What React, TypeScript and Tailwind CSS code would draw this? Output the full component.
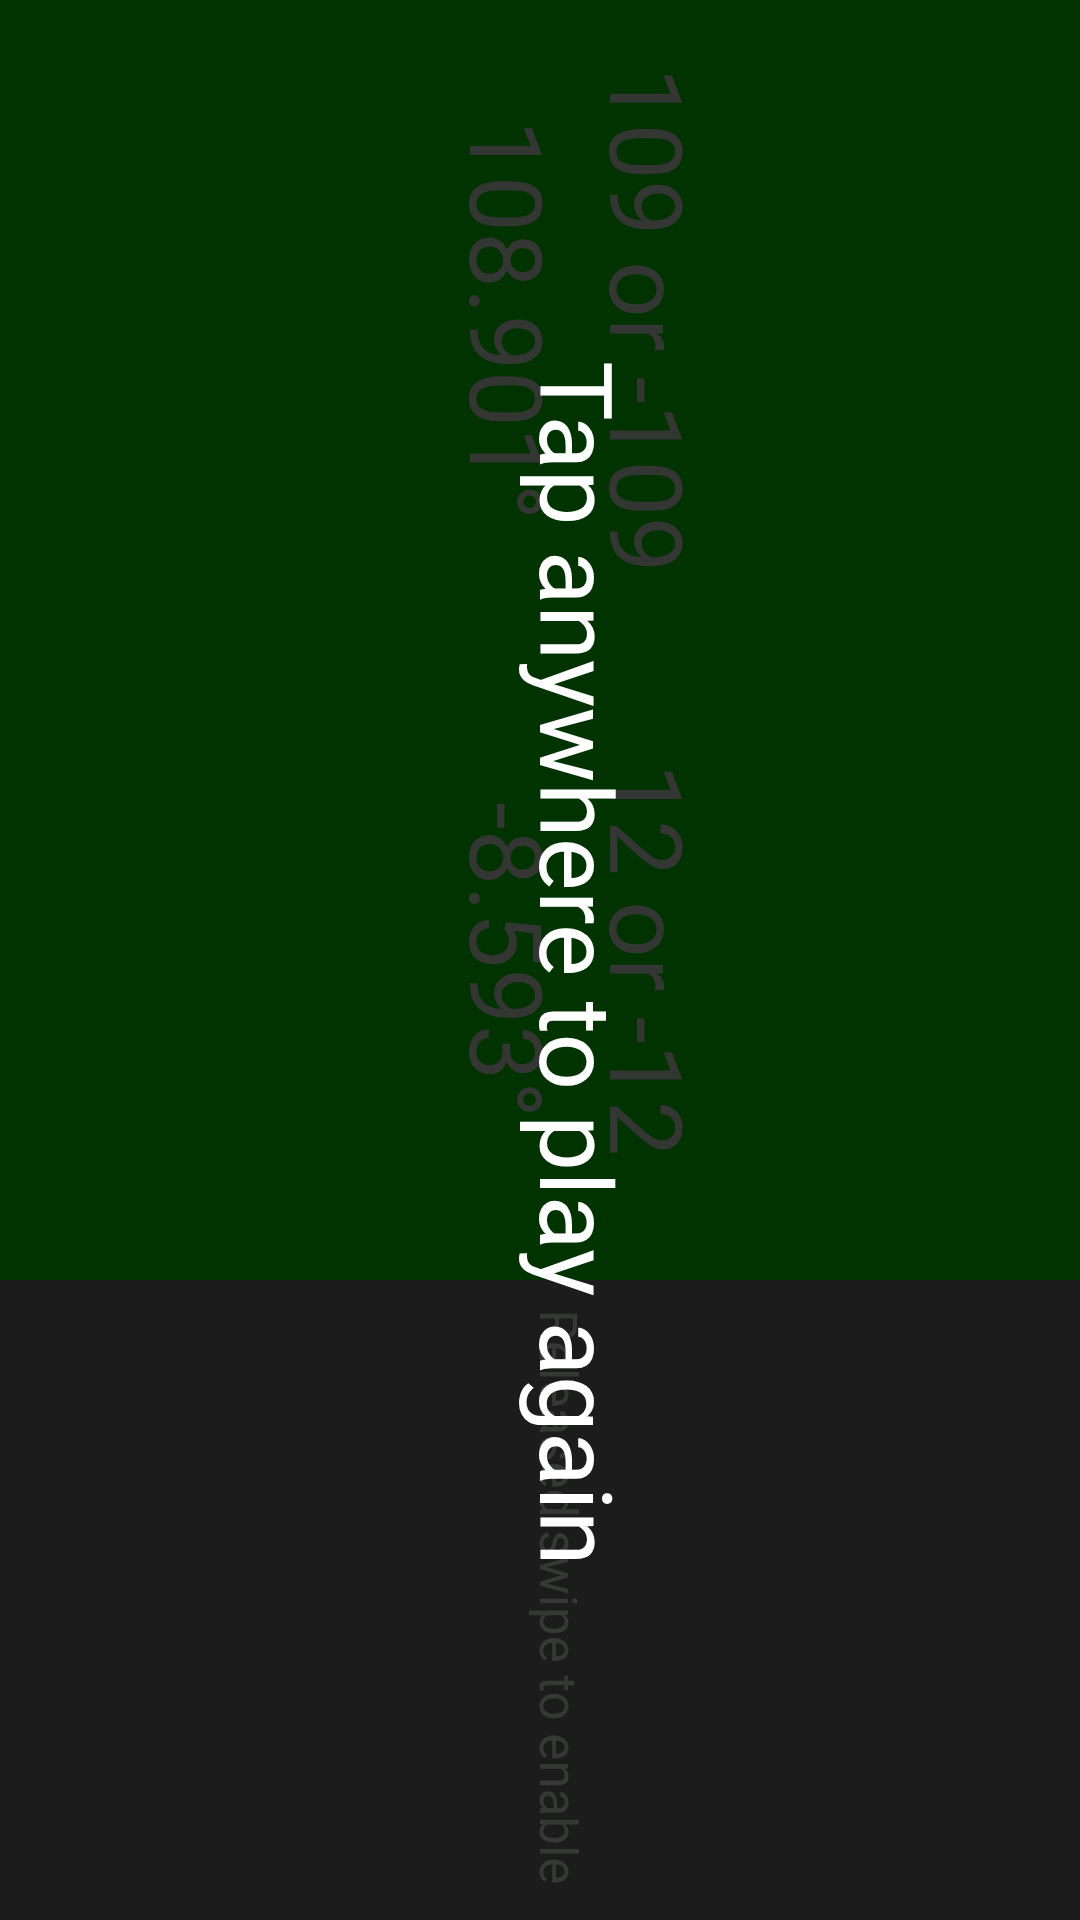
import React from "react";

const readings = [
  { target: "109 or -109", value: "108.901°" },
  { target: "12 or -12", value: "-8.593°" },
];

export default function App() {
  return (
    <div
      className="relative w-[1080px] h-[1920px] overflow-hidden bg-[#1b1c1b]"
      style={{ fontFamily: "Roboto, 'Noto Sans', sans-serif" }}
    >
      {/* landscape screen, turned a quarter clockwise */}
      <div className="absolute left-0 top-0 w-[1920px] h-[1080px] origin-top-left rotate-90 translate-x-[1080px] flex">
        <div className="w-[1280px] h-full bg-[#003300] grid grid-cols-2 content-start pt-[366px]">
          {readings.map((r) => (
            <div key={r.target} className="flex flex-col items-center text-[100px] leading-[140px] text-[#333633]">
              <span>{r.target}</span>
              <span>{r.value}</span>
            </div>
          ))}
        </div>
        <div className="flex-1 h-full flex justify-center pt-[497px] pr-[6px]">
          <span className="text-[51px] leading-none text-[#363836] whitespace-nowrap">
            Released swipe to enable
          </span>
        </div>

        <div className="absolute left-[361px] top-[456px] text-[100px] leading-none text-white whitespace-nowrap">
          Tap anywhere to play again
        </div>
      </div>
    </div>
  );
}
